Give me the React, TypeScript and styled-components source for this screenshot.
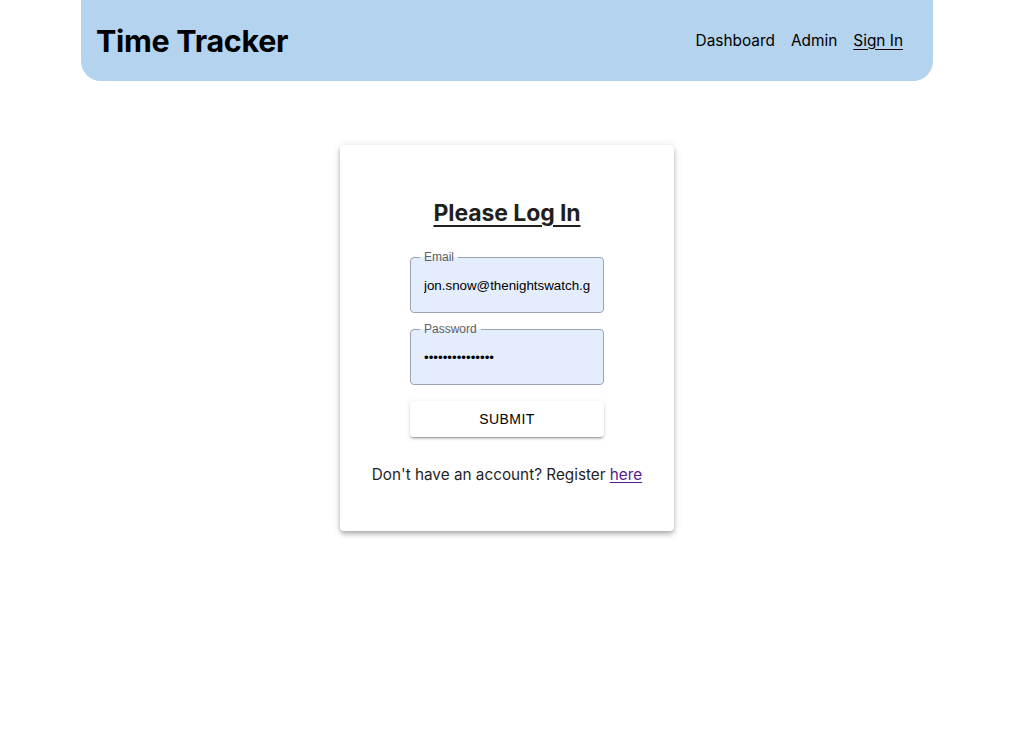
import React from "react";
import styled, { createGlobalStyle } from "styled-components";

const Global = createGlobalStyle`
  html, body { margin: 0; padding: 0; background: #fff; }
  body { font-family: Inter, "Noto Sans", sans-serif; color: #000; }
`;

const Page = styled.div`
  width: 1014px;
  min-height: 746px;
  display: flex;
  justify-content: center;
`;

const Container = styled.div`
  width: 852px;
  padding: 0 24px;
  display: flex;
  flex-direction: column;
  align-items: center;
`;

const Header = styled.header`
  align-self: stretch;
  height: 81px;
  background: #b3d3ee;
  border-radius: 0 0 20px 20px;
  display: flex;
  align-items: center;
  justify-content: space-between;
  padding: 0 30px 0 15px;
  box-sizing: border-box;
`;

const Title = styled.h1`
  margin: 0;
  font-size: 30.5px;
  font-weight: 700;
  letter-spacing: -0.3px;
  color: #000;
`;

const Nav = styled.nav`
  display: flex;
  gap: 16px;
  margin-top: -1px;
`;

const NavLink = styled.a<{ $active?: boolean }>`
  font-size: 15.4px;
  color: #000;
  text-decoration: ${(p) => (p.$active ? "underline" : "none")};
  text-underline-offset: 3px;
  cursor: pointer;
`;

const Card = styled.div`
  margin-top: 64px;
  width: 334px;
  height: 386px;
  box-sizing: border-box;
  background: #fff;
  border-radius: 4px;
  box-shadow: 0px 2px 4px -1px rgba(0,0,0,0.2), 0px 4px 5px 0px rgba(0,0,0,0.14), 0px 1px 10px 0px rgba(0,0,0,0.12);
  display: flex;
  flex-direction: column;
  align-items: center;
  padding-top: 54px;
`;

const Heading = styled.h2`
  margin: 0 0 30px;
  font-size: 23px;
  line-height: 28px;
  font-weight: 700;
  letter-spacing: -0.1px;
  color: #1f1f1f;
  text-decoration: underline;
  text-underline-offset: 4px;
  text-decoration-thickness: 2px;
`;

const Field = styled.div`
  position: relative;
  width: 194px;
  height: 56px;
  margin: 0 0 16px;
`;

const Outline = styled.div`
  position: absolute;
  inset: 0;
  border: 1px solid #9ba3b4;
  border-radius: 4px;
  background: #e3edfc;
`;

const Label = styled.span`
  position: absolute;
  top: -7px;
  left: 10px;
  padding: 0 4px;
  font-family: "Liberation Sans", Arial, sans-serif;
  font-size: 12px;
  color: #5f5f5f;
  background: linear-gradient(to bottom, #fff 0, #fff 7px, #e3edfc 7px);
  line-height: 14px;
`;

const Input = styled.input`
  position: relative;
  box-sizing: border-box;
  width: 100%;
  height: 100%;
  border: none;
  background: transparent;
  padding: 0 14px;
  font-family: "Liberation Sans", Arial, sans-serif;
  font-size: 13.33px;
  color: #000;
  outline: none;
`;

const Submit = styled.button`
  width: 194px;
  height: 36px;
  border: none;
  border-radius: 4px;
  background: #fff;
  box-shadow: 0px 3px 1px -2px rgba(0,0,0,0.2), 0px 2px 2px 0px rgba(0,0,0,0.14), 0px 1px 5px 0px rgba(0,0,0,0.12);
  font-family: "Liberation Sans", Arial, sans-serif;
  font-size: 14px;
  letter-spacing: 0.4px;
  color: #000;
  cursor: pointer;
`;

const Footer = styled.p`
  margin: 28px 0 0;
  font-size: 15.3px;
  line-height: 20px;
  color: #1f1f1f;
`;

const Link = styled.a`
  color: #551a8b;
  text-decoration: underline;
  text-underline-offset: 2px;
`;

export default function App() {
  return (
    <>
      <Global />
      <Page>
        <Container>
          <Header>
            <Title>Time Tracker</Title>
            <Nav>
              <NavLink>Dashboard</NavLink>
              <NavLink>Admin</NavLink>
              <NavLink $active>Sign In</NavLink>
            </Nav>
          </Header>
          <Card>
            <Heading>Please Log In</Heading>
            <Field>
              <Outline />
              <Label>Email</Label>
              <Input type="text" defaultValue="jon.snow@thenightswatch.gov" readOnly />
            </Field>
            <Field>
              <Outline />
              <Label>Password</Label>
              <Input type="password" defaultValue="iknownothing123" readOnly />
            </Field>
            <Submit>SUBMIT</Submit>
            <Footer>
              Don't have an account? Register <Link href="#">here</Link>
            </Footer>
          </Card>
        </Container>
      </Page>
    </>
  );
}
